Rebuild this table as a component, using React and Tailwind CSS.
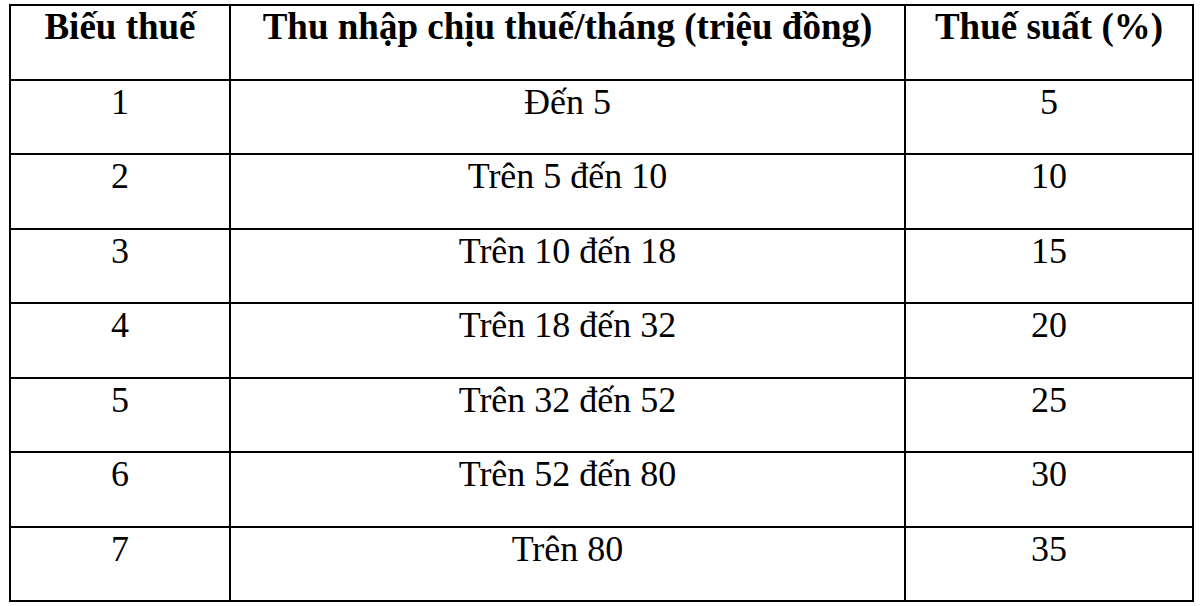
const rows = [
  ['1', 'Đến 5', '5'],
  ['2', 'Trên 5 đến 10', '10'],
  ['3', 'Trên 10 đến 18', '15'],
  ['4', 'Trên 18 đến 32', '20'],
  ['5', 'Trên 32 đến 52', '25'],
  ['6', 'Trên 52 đến 80', '30'],
  ['7', 'Trên 80', '35'],
]

function Cell({ children, bold }) {
  return (
    <div
      className={
        'h-[74.5px] border-r-2 border-b-2 border-black text-center leading-[41px] ' +
        (bold ? 'font-bold text-[37px]' : 'text-[36px] pt-[1px]')
      }
    >
      {children}
    </div>
  )
}

export default function App() {
  return (
    <div
      className="w-[1200px] h-[606px] bg-white pt-[4px] pl-[9px] text-black"
      style={{ fontFamily: '"Liberation Serif", "Times New Roman", serif' }}
    >
      <div className="grid grid-cols-[220px_675px_288px] w-[1185px] border-l-2 border-t-2 border-black">
        <Cell bold>Biếu thuế</Cell>
        <Cell bold>Thu nhập chịu thuế/tháng (triệu đồng)</Cell>
        <Cell bold>Thuế suất (%)</Cell>
        {rows.map((r) => (
          <div key={r[0]} className="contents">
            <Cell>{r[0]}</Cell>
            <Cell>{r[1]}</Cell>
            <Cell>{r[2]}</Cell>
          </div>
        ))}
      </div>
    </div>
  )
}
